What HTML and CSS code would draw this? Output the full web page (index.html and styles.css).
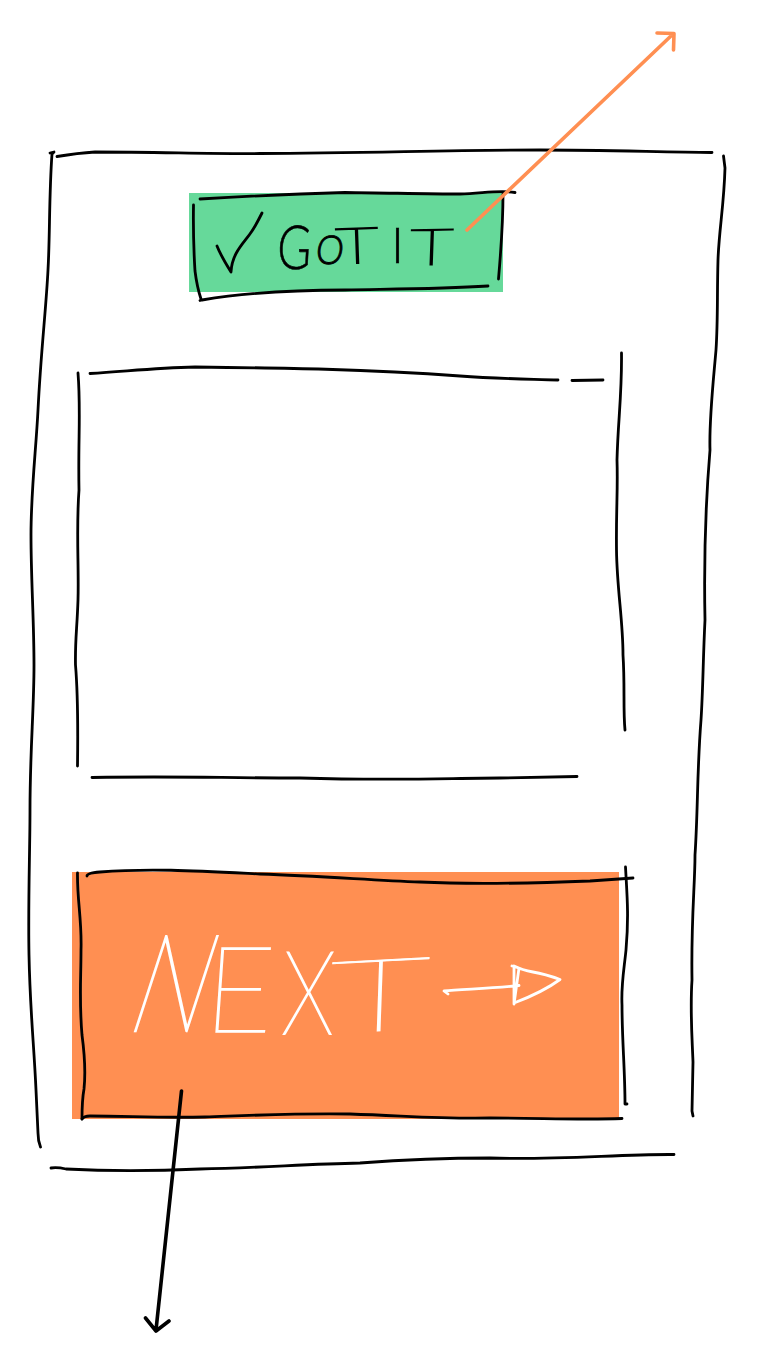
FILE: index.html
```
<!DOCTYPE html>
<html lang="en">
<head>
<meta charset="utf-8">
<title>Wireframe</title>
<link rel="stylesheet" href="styles.css">
</head>
<body>
<main class="board">
  <div class="button button-confirm">
    <svg class="check" viewBox="214 209 52 66"><path d="M217 246C221 256 226 264 231 272C232 252 245 242 252 231Q256 225 262 213"/></svg>
    <div class="label label-confirm">
      <span class="word"><span class="g">G</span><span class="o">O</span><span class="t1">T</span></span>
      <span class="word"><span class="i">I</span><span class="t2">T</span></span>
    </div>
  </div>
  <div class="panel"></div>
  <div class="button button-next">
    <div class="label label-next">
      <span class="word"><span class="n">N</span><span class="e">E</span><span class="x">X</span><span class="t3">T</span></span>
    </div>
    <svg class="arrow" viewBox="442 963 120 44"><path d="M448 994L444 991C460 989 490 989 519 985.5M512 966L519 968L514 1004L514 966Q522 970 533 972Q545 974 560 979.500Q543 992 514 1003"/></svg>
  </div>
  <svg class="strokes" viewBox="0 0 770 1352">
    <g class="outer">
      <path d="M50 153L54 152L52 154C49 195 50 235 48 270C46 310 41 350 38 410C36 450 31 490 31 535C31 580 34 620 34 665C34 710 30 750 30 810C30 850 28 900 29 955C30 1010 34 1045 36 1090L38 1133Q38 1141 40.500 1147"/>
      <path d="M57 156.500Q78 153 95 152C160 152 210 154 260 153.500C370 153 450 150 540 150C600 150 660 152 712 152.500"/>
      <path d="M723.500 156L725 168C724 205 719 230 718 260C717 295 718 320 716 350C713 385 709 420 710 450C705 510 704 570 705 620C703 660 703 690 701 720C697 770 698 810 695 855C695 885 691 920 692 980C690 1010 692 1035 693 1062L692 1111L693 1116"/>
      <path d="M51 1168Q57 1167 66 1169C105 1171 155 1171 200 1169C260 1168 305 1164 360 1163C400 1160 440 1158 490 1158C560 1160 620 1154 674 1154.500"/>
    </g>
    <g class="confirm-outline">
      <path d="M200 199C250 196 290 194 345 192.500C390 193 430 194 460 194C485 193 500 190 515 192.500"/>
      <path d="M193.500 205C193 235 194 255 195 271Q197 287 201 299"/>
      <path d="M200 300.500L202 300C245 293 285 290 345 290C395 289 440 289 488 286"/>
      <path d="M503 194C503 227 501 250 498.500 279"/>
    </g>
    <g class="panel-outline">
      <path d="M90 373.500C130 371 155 368 195 367C285 368 365 369 460 376C500 379 530 379 558 380M572 380.500L603 380"/>
      <path d="M78 373C81 410 78 440 79 490C76 530 79 565 78 600C77 630 75 640 75.500 665C78 695 78 730 77.500 766"/>
      <path d="M621.500 353C622 395 618 420 617 460C618 490 616 510 616.500 550C617 590 623 620 623 655C625 685 623 710 625 730"/>
      <path d="M92 777.500C180 776 220 778 300 778C400 781 450 778 500 778L577 776.500"/>
    </g>
    <g class="next-outline">
      <path d="M87 876Q87 873 100 872C150 868 200 871 260 874C320 876 370 880 420 882C480 885 540 883 590 881L633 878"/>
      <path d="M77.500 873C77 900 82 920 81 950C81 980 79 1000 82 1035C84 1050 86 1070 84 1089C82 1100 82 1108 82 1119"/>
      <path d="M82 1119Q84 1116 90 1116C130 1116 155 1118 205 1117C260 1115 300 1113 350 1114C410 1116 440 1119 490 1118C540 1118 580 1120 622 1118.500"/>
      <path d="M625.500 867C627 895 629 915 626 950C624 970 621 985 622 1005C622 1040 625 1070 625 1104L627 1104"/>
    </g>
    <path class="link link-confirm" d="M467 230L672 35M657 33L674 33.500L673.500 50"/>
    <path class="link link-next" d="M181.500 1091L156 1330M145.500 1318L156 1331L169 1321"/>
  </svg>
</main>
</body>
</html>
```

FILE: styles.css
```
* { box-sizing: border-box; }
body {
  margin: 0;
  background: #fff;
  font-family: Lato, "Open Sans", sans-serif;
}
.board {
  position: relative;
  width: 770px;
  height: 1352px;
  padding: 193px 151px 0 72px;
  overflow: hidden;
}
svg {
  display: block;
  fill: none;
  stroke-linecap: round;
  stroke-linejoin: round;
}
.strokes {
  position: absolute;
  inset: 0;
  width: 770px;
  height: 1352px;
  stroke: #000;
  stroke-width: 2.8;
}
.link { stroke-width: 3.6; }
.link-confirm { stroke: #ff8f52; }
.link-next { stroke: #000; }
.button { display: flex; }
.button-confirm {
  width: 313.5px;
  height: 99px;
  margin-left: 117px;
  padding: 16px 0 0 25px;
  background: #66d99a;
}
.panel { height: 580px; }
.button-next {
  width: 547px;
  height: 247px;
  padding: 53px 0 0 61px;
  background: #ff8f52;
}
.check { width: 52px; height: 66px; stroke: #000; stroke-width: 2.8; }
.arrow { width: 120px; height: 44px; margin-top: 38px; stroke: #fff; stroke-width: 2.8; }
.label, .word { display: flex; }
.label { line-height: 1; }
.word > span { display: block; transform-origin: 0 88.7%; }
.label-confirm {
  padding: 11px 0 0 13px;
  font-size: 50px;
  font-weight: 300;
  color: #000;
  -webkit-text-stroke: 0.5px #000;
}
.label-next {
  width: 309px;
  font-size: 120px;
  font-weight: 100;
  color: #fff;
  -webkit-text-stroke: 1.7px #fff;
}
.g { width: 40px; transform: translate(-4px, 9px) skewX(-3deg) scale(0.93, 1.22); }
.o { width: 18px; -webkit-text-stroke-width: 1.2px; transform: translate(-6px, -4px) skewX(-6deg) scale(0.7, 0.8); }
.t1 { width: 54px; font-weight: 100; -webkit-text-stroke-width: 1.6px; transform: rotate(-2deg) scale(1.5, 1); }
.i { width: 16px; transform: translateY(-1px); }
.t2 { width: 48px; font-weight: 100; -webkit-text-stroke-width: 1.6px; transform: translate(2px, 1px) rotate(-1deg) skewX(-3deg) scale(1.5, 1); }
.n { width: 74px; -webkit-text-stroke-width: 2.1px; transform: translate(-34px, 9px) skewX(-18deg) scale(0.84, 1.13); }
.e { width: 77px; -webkit-text-stroke-width: 1.5px; transform: translate(-9px, 1px) skewX(-4deg) scale(0.98, 1); }
.x { width: 50px; -webkit-text-stroke-width: 2.1px; transform: translate(-5px, 1px) skewX(-2deg) scale(0.72, 0.97); }
.t3 { width: 108px; -webkit-text-stroke-width: 1.1px; transform: translate(-8px, -8px) rotate(-3deg) skewX(-5deg) scale(1.48, 0.84); }
```
